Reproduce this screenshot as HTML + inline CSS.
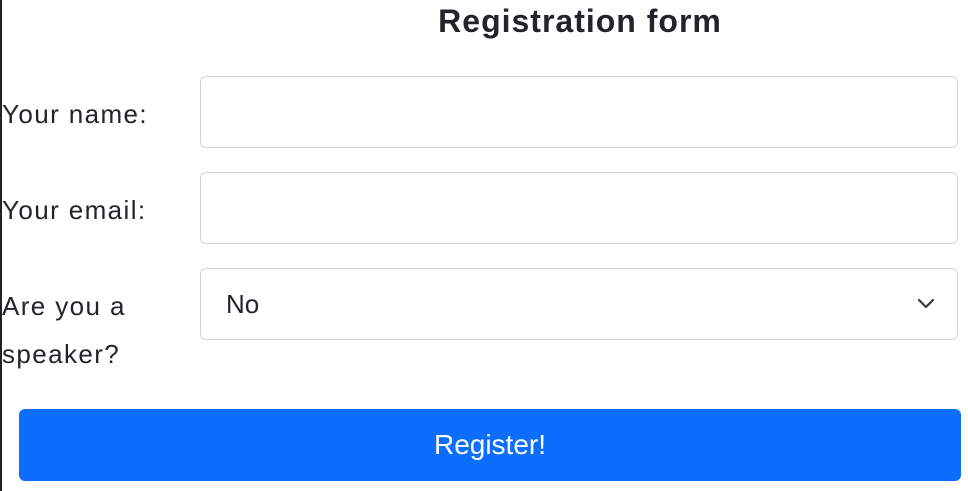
<!DOCTYPE html>
<html><head><meta charset="utf-8"><style>
html,body{margin:0;padding:0;width:968px;height:491px;overflow:hidden;background:#fff;font-family:"Liberation Sans",sans-serif;color:#212529}
.edge{position:absolute;left:0;top:0;width:2px;height:491px;background:#222}
h1{position:absolute;left:0;width:1160px;top:0;margin:0;text-align:center;font-size:32px;font-weight:bold;line-height:42px;color:#212529;letter-spacing:1px}
.lbl{position:absolute;left:2px;font-size:26px;line-height:48px;letter-spacing:1.4px}
.box{position:absolute;left:200px;width:756px;height:70px;border:1px solid #ced4da;border-radius:6px;background:#fff}
.sel{font-size:26px;line-height:70px;padding-left:25px;box-sizing:border-box;width:758px;height:72px}
.btn{position:absolute;left:19px;top:409px;width:942px;height:72px;background:#0d6efd;border-radius:6px;color:#fff;font-size:28px;line-height:72px;text-align:center}
</style></head><body>
<div class="edge"></div>
<h1>Registration form</h1>
<div class="lbl" style="top:90px">Your name:</div>
<div class="box" style="top:76px"></div>
<div class="lbl" style="top:186px">Your email:</div>
<div class="box" style="top:172px"></div>
<div class="lbl" style="top:282px">Are you a<br>speaker?</div>
<div class="box sel" style="top:268px">No
<svg style="position:absolute;right:22px;top:28px" width="18" height="14" viewBox="0 0 18 14"><path d="M2 3 L9 10 L16 3" fill="none" stroke="#343a40" stroke-width="2.2" stroke-linecap="round" stroke-linejoin="round"/></svg></div>
<div class="btn">Register!</div>
</body></html>
